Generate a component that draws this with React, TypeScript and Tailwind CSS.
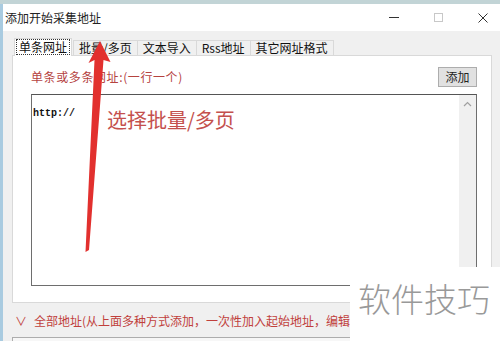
import React from "react";

function Tab({ label, selected }: { label: string; selected?: boolean }) {
  if (selected) {
    return (
      <div className="relative z-10 -mb-px flex h-[18px] items-start bg-white border border-b-0 border-[#d9d9d9] px-[1px] pt-[0px]">
        <span className="border border-dotted border-[#333] px-[2px] text-[12px] leading-[14px] text-[#111]">
          {label}
        </span>
      </div>
    );
  }
  return (
    <div className="-ml-px flex h-[15px] items-center bg-[#f0f0f0] border border-b-0 border-[#d9d9d9] px-[5px] text-[12px] leading-[14px] text-[#111]">
      {label}
    </div>
  );
}

export default function App() {
  return (
    <div
      className="relative flex h-[341px] w-[500px] flex-col overflow-hidden bg-[#f0f0f0]"
      style={{ fontFamily: '"Noto Sans CJK SC", "Noto Sans", sans-serif' }}
    >
      <div className="h-[4px] bg-[#c2d4d6]" />
      <div className="flex min-h-0 flex-1">
        <div className="w-[3px] bg-[#a9cbe0]" />
        <div className="flex min-w-0 flex-1 flex-col">
          {/* title bar */}
          <div className="flex h-[27px] items-center justify-between bg-white">
            <span className="pl-[2px] text-[12px] leading-[14px] text-[#222]">添加开始采集地址</span>
            <div className="mr-[12px] flex items-center gap-[35px]">
              <div className="h-px w-[10px] bg-[#333]" />
              <div className="h-[9px] w-[9px] border border-[#c8c8c8]" />
              <svg width="10" height="10" viewBox="0 0 10 10">
                <path d="M0.5 0.5 L9.5 9.5 M9.5 0.5 L0.5 9.5" stroke="#333" strokeWidth="1" />
              </svg>
            </div>
          </div>

          {/* body */}
          <div className="flex flex-1 flex-col pl-[9px] pr-[8px] pt-[7px]">
            <div className="flex h-[17px] items-end pl-[2px]">
              <Tab label="单条网址" selected />
              <div className="ml-[2px]" />
              <Tab label="批量/多页" />
              <Tab label="文本导入" />
              <Tab label="Rss地址" />
              <Tab label="其它网址格式" />
            </div>

            <div className="flex h-[248px] flex-col border border-[#d9d9d9] bg-white pl-[18px] pr-[14px] pt-[11px]">
              <div className="flex h-[20px] items-center justify-between">
                <span className="text-[12px] leading-[14px] tracking-[0.6px] text-[#b5433f]">单条或多条网址:(一行一个)</span>
                <div className="flex h-[20px] w-[39px] items-center justify-center border border-[#adadad] bg-[#e1e1e1] text-[12px] leading-[14px] text-[#222]">
                  添加
                </div>
              </div>
              <div className="mt-[7px] flex h-[192px] border border-[#6e6e6e] border-t-[#555] bg-white">
                <div className="flex-1 pl-[1px] pt-[2px]">
                  <span
                    className="text-[10px] font-bold leading-[14px] text-[#111]"
                    style={{ fontFamily: '"Liberation Mono", monospace' }}
                  >
                    http://
                  </span>
                </div>
                <div className="flex w-[17px] flex-col items-center bg-[#f0f0f0] pt-[6px]">
                  <svg width="9" height="6" viewBox="0 0 9 6">
                    <path d="M1 5 L4.5 1.5 L8 5" stroke="#a0a0a0" strokeWidth="1.2" fill="none" />
                  </svg>
                </div>
              </div>
            </div>

            <div className="mt-[10px] flex h-[16px] items-center pl-[3px] text-[12px] leading-[14px] text-[#c0403c]">
              <span className="mr-[7px]">∨</span>
              <span className="whitespace-nowrap">全部地址(从上面多种方式添加，一次性加入起始地址，编辑请</span>
            </div>
            <div className="mt-[8px] flex-1 border-x border-t border-[#adadad] bg-[#f7f7f7]" />
          </div>
        </div>
      </div>

      {/* annotation text */}
      <div className="absolute left-[107px] top-[108px] whitespace-nowrap text-[20px] leading-[24px] text-[#c4504d]">
        选择批量/多页
      </div>

      {/* red arrow */}
      <svg className="pointer-events-none absolute left-0 top-0" width="500" height="341" viewBox="0 0 500 341">
        <polygon
          points="100,41 110.5,62 103.5,60 89,250 85.5,252 94.5,60 88.5,63"
          fill="#e2302e"
        />
      </svg>

      {/* watermark */}
      <div className="absolute left-[350px] top-[267px] h-[74px] w-[150px] bg-white pl-[8px] pt-[15px]">
        <span className="whitespace-nowrap text-[33px] font-light leading-[33px] text-[#999]">软件技巧</span>
      </div>
    </div>
  );
}
